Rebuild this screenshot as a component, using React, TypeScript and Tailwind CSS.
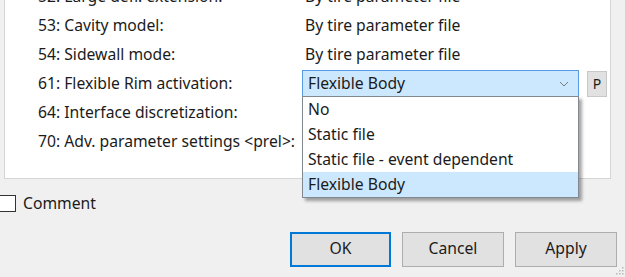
import { useState } from 'react';

const rows = [
  { label: '52: Large defl. extension:', value: 'By tire parameter file' },
  { label: '53: Cavity model:', value: 'By tire parameter file' },
  { label: '54: Sidewall mode:', value: 'By tire parameter file' },
  { label: '61: Flexible Rim activation:', value: 'combo' },
  { label: '64: Interface discretization:', value: '' },
  { label: '70: Adv. parameter settings <prel>:', value: '' },
];

const options = ['No', 'Static file', 'Static file - event dependent', 'Flexible Body'];

export default function App() {
  const [selected, setSelected] = useState('Flexible Body');
  const [comment, setComment] = useState(false);

  return (
    <div className="relative w-[625px] h-[277px] overflow-hidden bg-[#f0f0f0] text-[15.7px] text-[#1b1b1b] [font-family:'Noto_Sans',sans-serif]">
      {/* Parameter panel */}
      <div className="ml-[4px] mt-[-20px] w-[607px] h-[199px] bg-white border border-[#d5d5d5] pl-[33px] pt-[1px]">
        {rows.map((r) => (
          <div key={r.label} className="flex items-center h-[29px]">
            <div className="w-[264px] shrink-0 whitespace-nowrap">{r.label}</div>
            {r.value === 'combo' ? (
              <div className="flex items-center">
                <div className="flex items-center w-[277px] h-[28px] border border-[#569de5] bg-[#cce8ff] px-[5px]">
                  <span className="flex-1">{selected}</span>
                  <svg width="10" height="6" viewBox="0 0 10 6" className="mr-[4px]">
                    <path d="M1 1 L5 5 L9 1" fill="none" stroke="#7a7a7a" strokeWidth="1" />
                  </svg>
                </div>
                <button className="ml-[8px] w-[20px] h-[26px] bg-[#e1e1e1] border border-[#c8c8c8] text-[14px] leading-none">P</button>
              </div>
            ) : (
              <div className="pl-[3px] whitespace-nowrap">{r.value}</div>
            )}
          </div>
        ))}
      </div>

      {/* Open dropdown list */}
      <div className="absolute left-[302px] top-[96px] w-[277px] bg-white border border-[#828790] shadow-[3px_3px_3px_rgba(0,0,0,0.35)]">
        {options.map((o) => (
          <div
            key={o}
            onClick={() => setSelected(o)}
            className={`h-[25px] flex items-center px-[5px] whitespace-nowrap ${o === selected ? 'bg-[#cce8ff]' : ''}`}
          >
            {o}
          </div>
        ))}
      </div>

      {/* Comment checkbox */}
      <label className="flex items-center mt-[13px] ml-[-1px] gap-[7px]">
        <span
          onClick={() => setComment(!comment)}
          className="w-[17px] h-[17px] bg-white border border-[#333] flex items-center justify-center text-[12px]"
        >
          {comment ? '✓' : ''}
        </span>
        <span>Comment</span>
      </label>

      {/* Dialog buttons */}
      <div className="flex justify-end gap-[11px] mt-[16px] pr-[8px]">
        <button className="w-[101px] h-[35px] bg-[#e1e1e1] border-2 border-[#0078d7]">OK</button>
        <button className="w-[102px] h-[35px] bg-[#e1e1e1] border border-[#adadad]">Cancel</button>
        <button className="w-[102px] h-[35px] bg-[#e1e1e1] border border-[#adadad]">Apply</button>
      </div>

      {/* Resize grip */}
      <svg width="8" height="8" viewBox="0 0 8 8" className="absolute right-[1px] bottom-[2px]">
        <rect x="6" y="0" width="1.5" height="1.5" fill="#b8b8b8" />
        <rect x="3" y="3" width="1.5" height="1.5" fill="#b8b8b8" />
        <rect x="6" y="3" width="1.5" height="1.5" fill="#b8b8b8" />
        <rect x="0" y="6" width="1.5" height="1.5" fill="#b8b8b8" />
        <rect x="3" y="6" width="1.5" height="1.5" fill="#b8b8b8" />
        <rect x="6" y="6" width="1.5" height="1.5" fill="#b8b8b8" />
      </svg>
    </div>
  );
}
